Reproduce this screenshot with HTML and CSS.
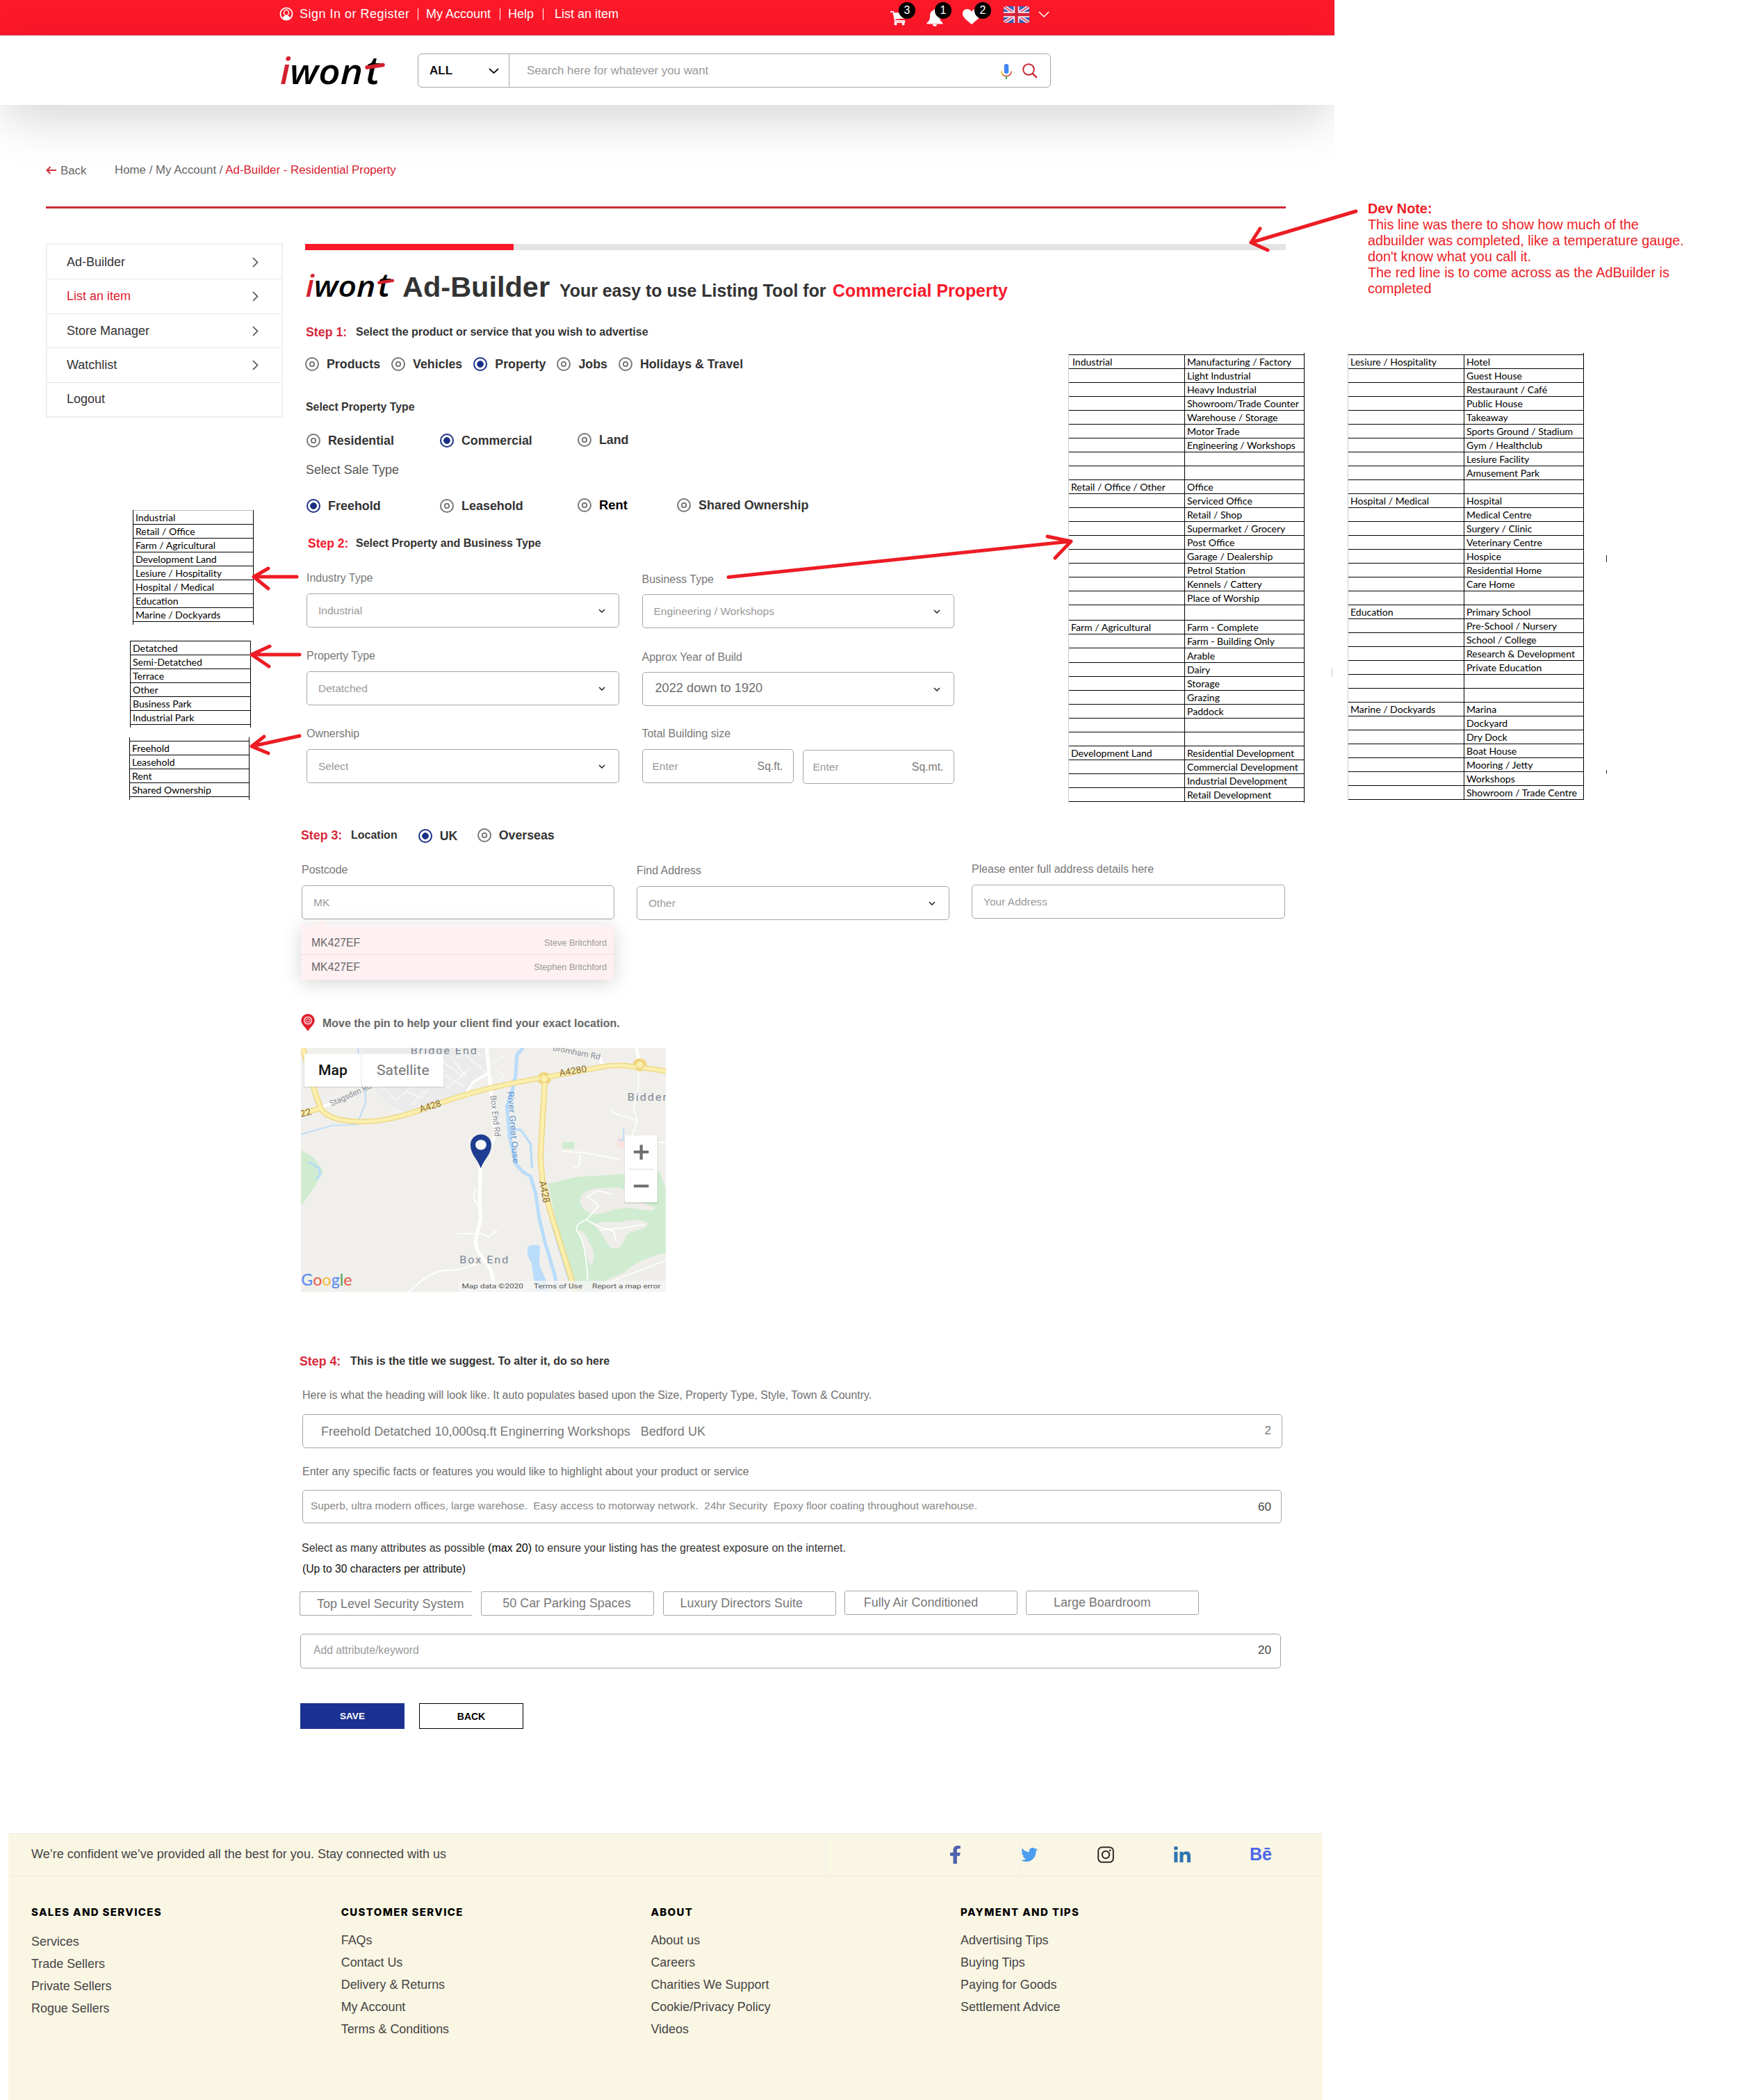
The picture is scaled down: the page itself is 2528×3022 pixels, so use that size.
FILE: index.html
```html
<!DOCTYPE html>
<html lang="en">
<head>
<meta charset="utf-8">
<title>iwont Ad-Builder - Commercial Property</title>
<link rel="stylesheet" href="styles.css">
</head>
<body>
<div class="board">
<div class="site">

  <div class="topbar">
    <nav class="topnav">
      <svg class="user" width="20" height="20" viewBox="0 0 20 20"><circle cx="10" cy="10" r="8.600" fill="none" stroke="#fff" stroke-width="1.800"/><ellipse cx="10" cy="8.200" rx="3.400" ry="4" fill="none" stroke="#fff" stroke-width="1.500"/><path d="M4.200 16c1-2.400 2.700-3.200 4.300-3.700h3c1.600.5 3.300 1.300 4.300 3.700a8.600 8.600 0 0 1-11.600 0z" fill="#fff"/></svg>
      <span class="n1">Sign In or Register</span><i class="sep"></i>
      <span class="n2">My Account</span><i class="sep"></i>
      <span class="n3">Help</span><i class="sep"></i>
      <span class="n4">List an item</span>
    </nav>
    <div class="tools">
      <span class="tool cart"><svg width="24" height="22" viewBox="0 0 24 22"><path d="M0 .9h4.200l2.600 12.900h13.400v2.300H5.600" fill="none" stroke="#fff" stroke-width="1.700"/><path d="M4.500 2.200H23l-2.300 8.300L6.300 11.800z" fill="#fff"/><circle cx="7.600" cy="18.400" r="2" fill="#fff"/><circle cx="18.600" cy="18.400" r="2" fill="#fff"/></svg><b class="badge">3</b></span>
      <span class="tool bell"><svg width="24" height="25" viewBox="0 0 24 25"><path d="M12 0c1.200 0 1.900.8 1.900 2 3.600 1 5 3.900 5 7.500 0 5.500 1.300 8 4.600 10.500v1.500H.5V20c3.300-2.500 4.600-5 4.600-10.500 0-3.600 1.400-6.500 5-7.500 0-1.200.7-2 1.900-2zM8.800 22h6.400c-.3 1.900-1.600 3-3.200 3s-2.900-1.100-3.200-3z" fill="#fff"/></svg><b class="badge">1</b></span>
      <span class="tool heart"><svg width="26" height="22" viewBox="0 0 26 22"><path d="M13 22C6 16 0 12 0 6.700 0 2.800 2.900 0 6.500 0 9.300 0 11.700 1.500 13 3.800 14.300 1.500 16.700 0 19.500 0 23.100 0 26 2.800 26 6.700 26 12 20 16 13 22z" fill="#fff"/></svg><b class="badge">2</b></span>
      <svg class="flag" width="37" height="24" viewBox="0 0 37 24"><rect width="37" height="24" fill="#3a5cb8"/><path d="M0 0l37 24M37 0L0 24" stroke="#efe3ee" stroke-width="5"/><path d="M0 0l37 24M37 0L0 24" stroke="#e0435c" stroke-width="1.600"/><path d="M18.500 0v24M0 12h37" stroke="#f6e6ea" stroke-width="8"/><path d="M18.500 0v24M0 12h37" stroke="#d5233c" stroke-width="4.600"/></svg>
      <svg class="down" width="16" height="9" viewBox="0 0 16 9"><path d="M.8 1l7.200 7 7.200-7" fill="none" stroke="#fff" stroke-width="1.500"/></svg>
    </div>
  </div>

  <header class="header">
    <svg class="logo" width="152" height="45" viewBox="0 0 152 45"><text x="0" y="45" font-size="52" fill="#d3202f">i</text><text x="14" y="45" font-size="50" textLength="105" lengthAdjust="spacingAndGlyphs">won</text><text x="123" y="45" font-size="56">t</text><path d="M125 21l23-3.500" stroke="#d3202f" stroke-width="5.500" stroke-linecap="round"/></svg>
    <div class="search">
      <div class="scope"><b>ALL</b><svg width="15" height="8" viewBox="0 0 15 8"><path d="M1 1l6.500 6L14 1" fill="none" stroke="#111" stroke-width="1.800"/></svg></div>
      <span class="ph">Search here for whatever you want</span>
      <svg class="mic" width="16" height="22" viewBox="0 0 16 22"><rect x="4.800" y="0" width="6.400" height="14" rx="3.200" fill="#4285f4"/><path d="M.9 10.500c0 2.300.7 3.900 2 5" fill="none" stroke="#fbbc05" stroke-width="1.800"/><path d="M2.900 15.500c2.800 2.800 7.400 2.800 10.200 0 1.300-1.100 2-2.700 2-5" fill="none" stroke="#d9604f" stroke-width="1.800"/><path d="M8 18v4" stroke="#34a853" stroke-width="2"/></svg>
      <svg class="glass" width="22" height="22" viewBox="0 0 22 22"><circle cx="9" cy="9" r="7.800" fill="none" stroke="#c8242f" stroke-width="1.900"/><path d="M14.800 14.800l6 6" stroke="#c8242f" stroke-width="2.400"/></svg>
    </div>
  </header>

  <div class="crumbs">
    <svg width="15" height="12" viewBox="0 0 15 12"><path d="M15 6H1.500M6.500 1L1.500 6l5 5" fill="none" stroke="#d3303c" stroke-width="2"/></svg>
    <span class="back">Back</span>
    <span class="trail">Home / My Account / <em>Ad-Builder - Residential Property</em></span>
  </div>

  <div class="main">
    <aside class="side">
      <a><span>Ad-Builder</span><svg width="9" height="15" viewBox="0 0 9 15"><path d="M1 1l6.500 6.500L1 14" fill="none" stroke="#444" stroke-width="1.500"/></svg></a>
      <a class="on"><span>List an item</span><svg width="9" height="15" viewBox="0 0 9 15"><path d="M1 1l6.500 6.500L1 14" fill="none" stroke="#444" stroke-width="1.500"/></svg></a>
      <a><span>Store Manager</span><svg width="9" height="15" viewBox="0 0 9 15"><path d="M1 1l6.500 6.500L1 14" fill="none" stroke="#444" stroke-width="1.500"/></svg></a>
      <a><span>Watchlist</span><svg width="9" height="15" viewBox="0 0 9 15"><path d="M1 1l6.500 6.500L1 14" fill="none" stroke="#444" stroke-width="1.500"/></svg></a>
      <a><span>Logout</span></a>
    </aside>

    <section class="content">
      <div class="progress"><i></i></div>
      <h1 class="title">
        <svg class="logo" width="130" height="38" viewBox="0 0 152 45"><text x="0" y="45" font-size="52" fill="#d3202f">i</text><text x="14" y="45" font-size="50" textLength="105" lengthAdjust="spacingAndGlyphs">won</text><text x="123" y="45" font-size="56">t</text><path d="M125 21l23-3.500" stroke="#d3202f" stroke-width="5.500" stroke-linecap="round"/></svg>
        <span class="big">Ad-Builder</span>
        <span class="sub">Your easy to use Listing Tool for</span>
        <span class="sub red">Commercial Property</span>
      </h1>

      <div class="step s1"><b>Step 1:</b><strong>Select the product or service that you wish to advertise</strong></div>
      <div class="radios r1">
        <label><i></i><span>Products</span></label>
        <label><i></i><span>Vehicles</span></label>
        <label><i class="on"></i><span>Property</span></label>
        <label><i></i><span>Jobs</span></label>
        <label><i></i><span>Holidays &amp; Travel</span></label>
      </div>
      <p class="subhead">Select Property Type</p>
      <div class="radios r2">
        <label><i></i><span>Residential</span></label>
        <label><i class="on"></i><span>Commercial</span></label>
        <label class="up"><i></i><span>Land</span></label>
      </div>
      <p class="subhead sale">Select Sale Type</p>
      <div class="radios r3">
        <label><i class="on"></i><span>Freehold</span></label>
        <label><i></i><span>Leasehold</span></label>
        <label class="up"><i></i><span class="rent">Rent</span></label>
        <label class="up"><i></i><span>Shared Ownership</span></label>
      </div>

      <div class="step s2"><b>Step 2:</b><strong>Select Property and Business Type</strong></div>
      <div class="fields two">
        <div class="field"><span class="lab">Industry Type</span><div class="box"><span>Industrial</span><svg class="chev" width="10" height="6" viewBox="0 0 10 6"><path d="M1 1l4 4 4-4" fill="none" stroke="#222" stroke-width="1.500"/></svg></div></div>
        <div class="field low"><span class="lab">Business Type</span><div class="box"><span>Engineering / Workshops</span><svg class="chev" width="10" height="6" viewBox="0 0 10 6"><path d="M1 1l4 4 4-4" fill="none" stroke="#222" stroke-width="1.500"/></svg></div></div>
        <div class="field"><span class="lab">Property Type</span><div class="box"><span>Detatched</span><svg class="chev" width="10" height="6" viewBox="0 0 10 6"><path d="M1 1l4 4 4-4" fill="none" stroke="#222" stroke-width="1.500"/></svg></div></div>
        <div class="field low"><span class="lab">Approx Year of Build</span><div class="box"><span class="year">2022 down to 1920</span><svg class="chev" width="10" height="6" viewBox="0 0 10 6"><path d="M1 1l4 4 4-4" fill="none" stroke="#222" stroke-width="1.500"/></svg></div></div>
        <div class="field"><span class="lab">Ownership</span><div class="box"><span>Select</span><svg class="chev" width="10" height="6" viewBox="0 0 10 6"><path d="M1 1l4 4 4-4" fill="none" stroke="#222" stroke-width="1.500"/></svg></div></div>
        <div class="field size"><span class="lab">Total Building size</span><div class="pair"><div class="box"><span>Enter</span><em>Sq.ft.</em></div><div class="box"><span>Enter</span><em>Sq.mt.</em></div></div></div>
      </div>

      <div class="step s3"><b>Step 3:</b><strong>Location</strong>
        <div class="radios r4"><label class="uk"><i class="on"></i><span>UK</span></label><label class="up"><i></i><span>Overseas</span></label></div>
      </div>
      <div class="fields three">
        <div class="field pc"><span class="lab">Postcode</span><div class="box"><span>MK</span></div>
          <div class="menu">
            <div><span>MK427EF</span><em>Steve Britchford</em></div>
            <div><span>MK427EF</span><em>Stephen Britchford</em></div>
          </div>
        </div>
        <div class="field fa"><span class="lab">Find Address</span><div class="box"><span>Other</span><svg class="chev" width="10" height="6" viewBox="0 0 10 6"><path d="M1 1l4 4 4-4" fill="none" stroke="#222" stroke-width="1.500"/></svg></div></div>
        <div class="field"><span class="lab">Please enter full address details here</span><div class="box"><span>Your Address</span></div></div>
      </div>

      <div class="pin"><svg width="20" height="25" viewBox="0 0 20 25"><path d="M10 0a9.700 9.700 0 0 1 9.700 9.700C19.700 15 13.500 19 10 25 6.500 19 .3 15 .3 9.700A9.700 9.700 0 0 1 10 0z" fill="#e01f2d"/><circle cx="10" cy="9.500" r="5.200" fill="none" stroke="#fff" stroke-width="1.300"/><circle cx="10" cy="9.500" r="2.500" fill="none" stroke="#fff" stroke-width="1"/></svg><b>Move the pin to help your client find your exact location.</b></div>

      <svg class="map" width="525" height="351" viewBox="35 54 1470 1052" preserveAspectRatio="none">
        <rect x="35" y="54" width="1470" height="1052" fill="#f0efeb"/>
        <path d="M270 54L640 54 790 54 790 160 700 240 500 320 440 335 380 290 330 230z" fill="#ebebeb"/>
        <g fill="none" stroke="#fafafa" stroke-width="4"><path d="M360 220l60 60 60-60M400 310l40 20M520 70l30 60 70 30M600 110l80 60 40-30M640 90l60 90M610 170l80 50M680 70l70 60 60 60M800 130l60-50M620 230l80-70M460 240l60 30 30-40M480 300l50-60M660 100l50-40 60 30M820 150l30 20-20 40"/></g>
        <path d="M35 495l50 30 40 60-30 60-60 90z" fill="#d0ecd0"/>
        <path d="M65 545l40 25 8 30-15 20" fill="none" stroke="#b9dcfb" stroke-width="9"/>
        <path d="M1030 640l120-30 330-20 25 70v280c-60 10-140 40-200 120l-50 46h-120l-60-240z" fill="#d0ecd0"/>
        <path d="M1165 690c30-40 90-30 150-35 30 10 60 60 145 85 10 30-60 5-110 5-60 0-90 30-140 25-40-10-60-50-45-80zM1210 815c60-20 80 0 130-15 50-10 90 0 95 15-20 30-70 20-90 50-10 30-20 55-50 55-30-5-40-75-85-105zM1150 840c30 0 40 40 60 80 10 30 5 60-5 70-20-10-20-90-55-150zM1505 955l-110 40-130 60 -20 51h260z" fill="#eeede9"/>
        <rect x="1088" y="460" width="48" height="29" fill="#d0ecd0"/>
        <path d="M1310 440h80v45h-80z" fill="#fbe1e0"/>
        <g fill="none" stroke="#fff" stroke-width="5"><path d="M1280 315c20 40 80 30 105 55M1090 500l80 5 150 30M1160 510l-3 50-25 15M1370 430l20-60-15 -60 20-90v-70M1470 461h35M1185 795l50-60-45-40 40-25 60 15M1185 795c-50 20-45 45-30 60 20 40 30 90 35 200M1185 795l50 30 60 20 10 40M1240 840l100 -10 80 -15M1505 970l-240 100M740 660c-20 40 0 60 10 80M665 855h100l25 15 35-30"/></g>
        <g fill="none" stroke="#b9dcfb"><path d="M265 54l5 60 25 80v100l-35 90-100 5-125 38" stroke-width="5"/><path d="M930 54l-25 30-5 90-15 70-20 60 10 130 25 120 30 35 30 20 20 70 15 110 25 110 30 107 25 100" stroke-width="14"/><path d="M880 405l40 2 40 60 6 105" stroke-width="9"/><path d="M1030 760l40 150 50 170" stroke-width="4"/><path d="M1335 400v50l-20 5" stroke-width="5"/></g>
        <path d="M950 910c15-8 40-8 48 0l-3 80 25 60 15 56h-55l-15-120-18-40z" fill="#b9dcfb"/>
        <g fill="none" stroke="#fff"><path d="M783 54l15 166 20 210-60 140-4 150 5 70-15 70c-12 40 0 70 20 95 30 40 45 60 50 151" stroke-width="14"/><path d="M700 250l30-50 65-40" stroke-width="11"/><path d="M1385 54l15 60M1240 95l6 30M115 310l60-25" stroke-width="12"/><path d="M745 985c-90 40-110 20-160 35-50 20-80 50-115 86" stroke-width="6"/></g>
        <g fill="none" stroke="#efd57f" stroke-width="23"><path d="M42 54l55 210 18 50c20 40 80 55 150 58 120 5 240-45 330-80 130-50 270-85 420-110l225-45c50-12 100-12 265 18M35 338l80-24M1018 185l-18 340 8 100 30 130 105 360"/></g>
        <circle cx="1015" cy="186" r="28" fill="#efd57f"/><circle cx="1400" cy="127" r="28" fill="#efd57f"/>
        <g fill="none" stroke="#fbefaf" stroke-width="15"><path d="M42 54l55 210 18 50c20 40 80 55 150 58 120 5 240-45 330-80 130-50 270-85 420-110l225-45c50-12 100-12 265 18M35 338l80-24M1018 185l-18 340 8 100 30 130 105 360"/></g>
        <circle cx="1015" cy="186" r="16" fill="#fbefaf" stroke="#efd57f" stroke-width="5"/><circle cx="1400" cy="127" r="16" fill="#fbefaf" stroke="#efd57f" stroke-width="5"/>
        <g class="road">
          <text x="517" y="332" textLength="90" lengthAdjust="spacingAndGlyphs" transform="rotate(-18 517 332)">A428</text>
          <text x="1078" y="176" textLength="112" lengthAdjust="spacingAndGlyphs" transform="rotate(-10 1078 176)">A4280</text>
          <text x="995" y="630" textLength="95" lengthAdjust="spacingAndGlyphs" transform="rotate(80 995 630)">A428</text>
          <text x="36" y="353" transform="rotate(-16 36 353)">22</text>
        </g>
        <g class="street">
          <text x="158" y="306" textLength="182" lengthAdjust="spacingAndGlyphs" transform="rotate(-26 158 306)">Stagsden Rd</text>
          <text x="1048" y="64" textLength="195" lengthAdjust="spacingAndGlyphs" transform="rotate(12 1048 64)">Bromham Rd</text>
          <text x="797" y="260" textLength="178" lengthAdjust="spacingAndGlyphs" transform="rotate(84 797 260)">Box End Rd</text>
          <text class="river" x="868" y="242" textLength="312" lengthAdjust="spacingAndGlyphs" transform="rotate(86 868 242)">River Great Ouse</text>
        </g>
        <g class="town">
          <text x="477" y="80" textLength="266" lengthAdjust="spacing">Bridge End</text>
          <text x="1350" y="282" textLength="158" lengthAdjust="spacing">Bidder</text>
          <text x="674" y="984" textLength="196" lengthAdjust="spacing">Box End</text>
        </g>
        <path d="M760 574c-12-40-42-60-42-103a42 44 0 0 1 84 0c0 43-30 63-42 103z" fill="#1f3d90"/><circle cx="760" cy="472" r="22" fill="#fafafa"/>
        <rect x="46" y="82" width="564" height="144" fill="#000" opacity=".1"/><rect x="48" y="80" width="561" height="141" fill="#fff"/><path d="M278 80v141" stroke="#e8e8e8" stroke-width="3"/>
        <text class="ctl dark" x="105" y="171" textLength="117" lengthAdjust="spacingAndGlyphs">Map</text>
        <text class="ctl" x="340" y="171" textLength="212" lengthAdjust="spacingAndGlyphs">Satellite</text>
        <rect x="1337" y="434" width="137" height="292" fill="#000" opacity=".1"/><rect x="1339" y="432" width="132" height="288" fill="#fff"/>
        <path d="M1355 577h102" stroke="#ddd" stroke-width="3"/><path d="M1376 503h60M1406 472v64M1376 650h60" stroke="#6e6e6e" stroke-width="12"/>
        <rect x="668" y="1058" width="837" height="48" fill="#f5f5f5" opacity=".8"/>
        <g class="legal">
          <text x="683" y="1090" textLength="248" lengthAdjust="spacingAndGlyphs">Map data ©2020</text>
          <text x="973" y="1090" textLength="196" lengthAdjust="spacingAndGlyphs">Terms of Use</text>
          <text x="1208" y="1090" textLength="276" lengthAdjust="spacingAndGlyphs">Report a map error</text>
        </g>
        <text class="google" x="36" y="1078" textLength="205" lengthAdjust="spacingAndGlyphs"><tspan fill="#5b8def">G</tspan><tspan fill="#e8604f">o</tspan><tspan fill="#f2bd42">o</tspan><tspan fill="#5b8def">g</tspan><tspan fill="#58a55c">l</tspan><tspan fill="#e8604f">e</tspan></text>
      </svg>

      <div class="step s4"><b>Step 4:</b><strong>This is the title we suggest. To alter it, do so here</strong></div>
      <p class="note here">Here is what the heading will look like. It auto populates based upon the Size, Property Type, Style, Town &amp; Country.</p>
      <div class="wide w1"><span class="head">Freehold Detatched 10,000sq.ft Enginerring Workshops&nbsp;&nbsp; Bedford UK</span><em>2</em></div>
      <p class="note facts">Enter any specific facts or features you would like to highlight about your product or service</p>
      <div class="wide w2"><span class="superb">Superb, ultra modern offices, large warehose.&nbsp; Easy access to motorway network.&nbsp; 24hr Security&nbsp; Epoxy floor coating throughout warehouse.</span><em>60</em></div>
      <p class="attr">Select as many attributes as possible <span>(max 20)</span> to ensure your listing has the greatest exposure on the internet.</p>
      <p class="attr upto">(Up to 30 characters per attribute)</p>
      <div class="chips">
        <div class="open"><span>Top Level Security System</span></div>
        <div><span>50 Car Parking Spaces</span></div>
        <div><span>Luxury Directors Suite</span></div>
        <div class="up"><span>Fully Air Conditioned</span></div>
        <div class="up"><span>Large Boardroom</span></div>
      </div>
      <div class="wide w3"><span class="add">Add attribute/keyword</span><em>20</em></div>
      <div class="buttons"><button class="save">SAVE</button><button>BACK</button></div>
    </section>
  </div>

  <footer class="footer">
    <div class="social">
      <p>We’re confident we’ve provided all the best for you. Stay connected with us</p>
      <div class="icons">
        <svg width="15" height="26" viewBox="22 0 276 512" preserveAspectRatio="none"><path fill="#4f62ae" d="M279.140 288l14.220-92.660h-88.910v-60.130c0-25.350 12.420-50.060 52.240-50.060h40.420V6.260S260.430 0 225.360 0c-73.220 0-121.080 44.380-121.080 124.720v70.620H22.890V288h81.390v224h100.170V288z"/></svg>
        <svg class="tw" width="24" height="20" viewBox="0 48 512 416" preserveAspectRatio="none"><path fill="#4a9df0" d="M459.370 151.716c.325 4.548.325 9.097.325 13.645 0 138.720-105.583 298.558-298.558 298.558-59.452 0-114.680-17.219-161.137-47.106 8.447.974 16.568 1.299 25.340 1.299 49.055 0 94.213-16.568 130.274-44.832-46.132-.975-84.792-31.188-98.112-72.772 6.498.974 12.995 1.624 19.818 1.624 9.421 0 18.843-1.300 27.614-3.573-48.081-9.747-84.143-51.980-84.143-102.985v-1.299c13.969 7.797 30.214 12.670 47.431 13.319-28.264-18.843-46.781-51.005-46.781-87.391 0-19.492 5.197-37.360 14.294-52.954 51.655 63.675 129.300 105.258 216.365 109.807-1.624-7.797-2.599-15.918-2.599-24.040 0-57.828 46.782-104.934 104.934-104.934 30.213 0 57.502 12.670 76.670 33.137 23.715-4.548 46.456-13.320 66.599-25.340-7.798 24.366-24.366 44.833-46.132 57.827 21.117-2.273 41.584-8.122 60.426-16.243-14.292 20.791-32.161 39.308-52.628 54.253z"/></svg>
        <svg class="ig" width="24" height="24" viewBox="0 0 24 24"><rect x="1.200" y="1.200" width="21.600" height="21.600" rx="5.500" fill="none" stroke="#2f2a25" stroke-width="2"/><circle cx="12" cy="12" r="5.200" fill="none" stroke="#2f2a25" stroke-width="2"/><circle cx="18.200" cy="5.800" r="1.400" fill="#2f2a25"/></svg>
        <svg class="li" width="24" height="23" viewBox="0 0 448 448" preserveAspectRatio="none"><path fill="#2f73b0" d="M100.280 448H7.400V148.900h92.880zM53.790 108.100C24.090 108.100 0 83.500 0 53.800a53.790 53.790 0 0 1 107.580 0c0 29.700-24.100 54.300-53.790 54.300zM447.900 448h-92.680V302.400c0-34.700-.7-79.200-48.290-79.200-48.290 0-55.690 37.700-55.690 76.700V448h-92.780V148.900h89.080v40.800h1.300c12.400-23.500 42.690-48.300 87.880-48.300 94 0 111.280 61.900 111.280 142.300V448z"/></svg>
        <b class="be">Bē</b>
      </div>
    </div>
    <div class="cols">
      <div class="col c1"><h4>SALES AND SERVICES</h4><a>Services</a><a>Trade Sellers</a><a>Private Sellers</a><a>Rogue Sellers</a></div>
      <div class="col"><h4>CUSTOMER SERVICE</h4><a>FAQs</a><a>Contact Us</a><a>Delivery &amp; Returns</a><a>My Account</a><a>Terms &amp; Conditions</a></div>
      <div class="col"><h4>ABOUT</h4><a>About us</a><a>Careers</a><a>Charities We Support</a><a>Cookie/Privacy Policy</a><a>Videos</a></div>
      <div class="col"><h4>PAYMENT AND TIPS</h4><a>Advertising Tips</a><a>Buying Tips</a><a>Paying for Goods</a><a>Settlement Advice</a></div>
    </div>
  </footer>
</div>

<!-- review notes pinned over the page -->
<table class="sheet l1"><tr><td>Industrial</td></tr><tr><td>Retail / Office</td></tr><tr><td>Farm / Agricultural</td></tr><tr><td>Development Land</td></tr><tr><td>Lesiure / Hospitality</td></tr><tr><td>Hospital / Medical</td></tr><tr><td>Education</td></tr><tr><td>Marine / Dockyards</td></tr></table>
<table class="sheet l2"><tr><td>Detatched</td></tr><tr><td>Semi-Detatched</td></tr><tr><td>Terrace</td></tr><tr><td>Other</td></tr><tr><td>Business Park</td></tr><tr><td>Industrial Park</td></tr></table>
<table class="sheet l3"><tr><td>Freehold</td></tr><tr><td>Leasehold</td></tr><tr><td>Rent</td></tr><tr><td>Shared Ownership</td></tr></table>

<table class="sheet big1">
<tr><td class="ind">Industrial</td><td>Manufacturing / Factory</td></tr>
<tr><td></td><td>Light Industrial</td></tr>
<tr><td></td><td>Heavy Industrial</td></tr>
<tr><td></td><td>Showroom/Trade Counter</td></tr>
<tr><td></td><td>Warehouse / Storage</td></tr>
<tr><td></td><td>Motor Trade</td></tr>
<tr><td></td><td>Engineering / Workshops</td></tr>
<tr><td></td><td></td></tr>
<tr><td></td><td></td></tr>
<tr><td>Retail / Office / Other</td><td>Office</td></tr>
<tr><td></td><td>Serviced Office</td></tr>
<tr><td></td><td>Retail / Shop</td></tr>
<tr><td></td><td>Supermarket / Grocery</td></tr>
<tr><td></td><td>Post Office</td></tr>
<tr><td></td><td>Garage / Dealership</td></tr>
<tr><td></td><td>Petrol Station</td></tr>
<tr><td></td><td>Kennels / Cattery</td></tr>
<tr><td></td><td>Place of Worship</td></tr>
<tr class="h22"><td></td><td></td></tr>
<tr><td>Farm / Agricultural</td><td>Farm - Complete</td></tr>
<tr><td></td><td>Farm - Building Only</td></tr>
<tr class="h21"><td></td><td>Arable</td></tr>
<tr><td></td><td>Dairy</td></tr>
<tr><td></td><td>Storage</td></tr>
<tr><td></td><td>Grazing</td></tr>
<tr><td></td><td>Paddock</td></tr>
<tr><td></td><td></td></tr>
<tr><td></td><td></td></tr>
<tr><td>Development Land</td><td>Residential Development</td></tr>
<tr><td></td><td>Commercial Development</td></tr>
<tr><td></td><td>Industrial Development</td></tr>
<tr><td></td><td>Retail Development</td></tr>
</table>
<table class="sheet big2">
<tr><td>Lesiure / Hospitality</td><td>Hotel</td></tr>
<tr><td></td><td>Guest House</td></tr>
<tr><td></td><td>Restauraunt / Café</td></tr>
<tr><td></td><td>Public House</td></tr>
<tr><td></td><td>Takeaway</td></tr>
<tr><td></td><td>Sports Ground / Stadium</td></tr>
<tr><td></td><td>Gym / Healthclub</td></tr>
<tr><td></td><td>Lesiure Facility</td></tr>
<tr><td></td><td>Amusement Park</td></tr>
<tr><td></td><td></td></tr>
<tr><td>Hospital / Medical</td><td>Hospital</td></tr>
<tr><td></td><td>Medical Centre</td></tr>
<tr><td></td><td>Surgery / Clinic</td></tr>
<tr><td></td><td>Veterinary Centre</td></tr>
<tr><td></td><td>Hospice</td></tr>
<tr><td></td><td>Residential Home</td></tr>
<tr><td></td><td>Care Home</td></tr>
<tr><td></td><td></td></tr>
<tr><td>Education</td><td>Primary School</td></tr>
<tr><td></td><td>Pre-School / Nursery</td></tr>
<tr><td></td><td>School / College</td></tr>
<tr><td></td><td>Research &amp; Development</td></tr>
<tr><td></td><td>Private Education</td></tr>
<tr><td></td><td></td></tr>
<tr><td></td><td></td></tr>
<tr><td>Marine / Dockyards</td><td>Marina</td></tr>
<tr><td></td><td>Dockyard</td></tr>
<tr><td></td><td>Dry Dock</td></tr>
<tr><td></td><td>Boat House</td></tr>
<tr><td></td><td>Mooring / Jetty</td></tr>
<tr><td></td><td>Workshops</td></tr>
<tr><td></td><td>Showroom / Trade Centre</td></tr>
</table>

<div class="devnote"><b>Dev Note:</b><br>This line was there to show how much of the<br>adbuilder was completed, like a temperature gauge.<br>don't know what you call it.<br>The red line is to come across as the AdBuilder is<br>completed</div>

<svg class="arrows" width="2528" height="1200" viewBox="0 0 2528 1200">
  <g fill="none" stroke="#ed1c24" stroke-width="5" stroke-linecap="round" stroke-linejoin="round">
    <path d="M1951 304L1800 349M1813 329l-13 20 24 11"/>
    <path d="M427 830h-62M386 818l-21 12 21 17"/>
    <path d="M431 942h-69M388 930l-26 12 25 17"/>
    <path d="M431 1059l-69 15M380 1060l-18 14 24 10"/>
    <path d="M1048 830.500L1541 779M1507 772l34 7-23 24"/>
  </g>
  <path d="M2311.500 799v10M2311.500 1108v5" stroke="#222"/><path d="M1916.500 961v13" stroke="#ccc"/>
</svg>
</div>
</body>
</html>
```
FILE: styles.css
```css
* { box-sizing: border-box; }
body { margin: 0; background: #fff; font-family: "Liberation Sans", Arial, sans-serif; color: #333; }
h1, h4, p { margin: 0; }
em, i { font-style: normal; }
svg { display: block; flex: none; }
.board { position: relative; width: 2528px; height: 3022px; overflow: hidden; }
.site { width: 1920px; height: 3022px; overflow: hidden; background: #fff; }

/* top bar */
.topbar { display: flex; height: 51px; background: #fb1829; border-bottom: 1px solid #d3283a; color: #fff; }
.topnav { display: flex; align-items: flex-start; width: 1281px; padding: 8px 0 0 402px; font-size: 18px; line-height: 24px; white-space: nowrap; }
.topnav .user { margin: 2px 9px 0 0; }
.n1 { width: 170px; letter-spacing: .5px; }
.n2 { width: 106px; }
.n3 { width: 50px; }
.sep { width: 1px; height: 17px; margin: 4px 11px 0 0; background: #fff; }
.n3 + .sep { margin-right: 16px; }
.tools { display: flex; align-items: flex-start; }
.tool { position: relative; }
.cart { width: 52px; padding-top: 16px; }
.bell { width: 52px; padding-top: 13px; }
.heart { width: 59px; padding-top: 13px; }
.badge { position: absolute; left: 12px; top: 3px; width: 24px; height: 24px; border-radius: 50%; background: #000; color: #fff; font-weight: 400; font-size: 16px; line-height: 24px; text-align: center; }
.heart .badge { left: 17px; }
.flag { margin-top: 9px; }
.down { margin: 16px 0 0 13px; }

/* header */
.header { display: flex; height: 100px; padding-left: 403px; background: #fff; box-shadow: 0 26px 68px -6px rgba(0,0,0,.17); }
.logo { font-family: "Open Sans", sans-serif; font-style: italic; font-weight: 600; fill: #000; overflow: visible; }
.header .logo { margin-top: 25px; }
.search { display: flex; align-items: center; width: 911px; height: 49px; margin: 26px 0 0 46px; border: 1px solid #a5a5a5; border-radius: 6px; }
.scope { display: flex; align-items: center; justify-content: space-between; width: 131px; height: 47px; padding: 0 14px 0 16px; border-right: 1px solid #a5a5a5; font-size: 17px; color: #111; }
.ph { flex: 1; padding-left: 25px; font-size: 16.850px; color: #999; }
.mic { margin: 3px 15px 0 0; }
.glass { margin-right: 18px; }

/* breadcrumb */
.crumbs { display: flex; align-items: center; height: 149px; margin: 0 70px 0 66px; padding-top: 42px; border-bottom: 3px solid #cb2a3a; font-size: 16.870px; color: #666; }
.crumbs .back { width: 84px; padding: 2px 0 0 6px; }
.crumbs em { color: #d6202f; }

/* main */
.main { display: flex; height: 2338px; padding-left: 66px; }
.side { width: 341px; height: 251px; margin: 50px 25px 0 0; border: 2px solid #f0f0f0; }
.side a { display: flex; justify-content: space-between; align-items: center; height: 50px; padding: 0 33px 0 28px; border-bottom: 1px solid #e6e6e6; font-size: 18px; color: #333; }
.side a:first-child { height: 50px; padding-top: 1px; }
.side a:nth-child(3) { height: 49px; }
.side a:last-child { height: 48px; border: 0; padding-bottom: 1px; }
.side .on { color: #e0202f; }
.content { width: 1418px; padding-top: 51px; }
.progress { width: 1411px; height: 9px; margin-left: 7px; background: #e4e4e4; }
.progress i { display: block; width: 300px; height: 9px; background: #f71a2b; }
.title { display: flex; align-items: baseline; height: 60px; margin: 23px 0 0 7px; font-weight: 700; white-space: nowrap; color: #333; }
.title .big { width: 226px; margin-left: 10px; font-size: 41.500px; line-height: 60px; }
.title .sub { width: 393px; font-size: 24.900px; }
.title .red { color: #f71a2b; }

.step { display: flex; height: 24px; line-height: 24px; font-size: 16px; white-space: nowrap; color: #333; }
.step b { width: 72px; font-size: 17.800px; color: #d6283a; }
.s1 { margin: 23px 0 0 8px; }
.s2 { margin: 30px 0 0 11px; }
.s2 b { width: 69px; font-size: 17.500px; color: #f71a2b; }
.s3 { margin: 62px 0 0 1px; }
.s4 { margin: 88px 0 0 -1px; }
.s4 b { width: 73px; }

.radios { display: flex; height: 24px; line-height: 24px; font-weight: 700; font-size: 17.800px; color: #333; white-space: nowrap; }
.radios label { display: flex; align-items: center; }
.radios i { flex: none; width: 20px; height: 20px; margin-right: 11px; border: 2px solid #777; border-radius: 50%; background: radial-gradient(circle, #fff 0 2px, #777 2.500px 4px, #fff 4.500px); }
.radios i.on { border-color: #1b3087; background: radial-gradient(circle, #1b3087 0 4.500px, #fff 5px); }
.radios .up { position: relative; top: -1px; }
.r1 { margin: 22px 0 0 7px; gap: 16px; }
.subhead { height: 24px; margin: 37px 0 0 8px; line-height: 25px; font-size: 15.850px; font-weight: 700; }
.r2 { margin: 25px 0 0 9px; }
.sale { margin-top: 18px; font-size: 17.900px; line-height: 24px; font-weight: 400; color: #555; }
.r3 { margin: 28px 0 0 9px; font-size: 17.950px; }
.r2 label, .r3 label { width: 192px; }
.r2 label + label, .r3 label + label { width: 198px; }
.r3 label + label + label { width: 143px; }
.rent { color: #000; font-size: 18.400px; }
.r4 { margin-top: 1px; }
.s3 .r4 { margin-left: 30px; }
.uk { width: 85px; }

.fields { display: grid; }
.two { grid-template-columns: 449.500px 449px; column-gap: 33px; row-gap: 28px; margin: 26px 0 0 9px; }
.field { position: relative; height: 84px; }
.lab { display: block; height: 24px; margin-bottom: 10px; line-height: 24px; font-size: 15.950px; color: #777; white-space: nowrap; }
.low .lab { padding-top: 2px; margin-bottom: 11px; }
.box { display: flex; align-items: center; justify-content: space-between; height: 49px; padding: 0 19px 0 16px; border: 1px solid #a5a5a5; border-radius: 5px; font-size: 15.550px; color: #999; background: #fff; }
.box em { font-size: 15.800px; color: #777; }
.box .year { padding: 0 0 2px 2px; font-size: 18.200px; color: #6e6e6e; }
.pair { display: flex; gap: 13px; }
.pair .box { width: 218px; padding: 0 14px; }
.pair .box + .box { margin-top: 1px; }
.three { grid-template-columns: 450px 450px 451px; column-gap: 32px; height: 86px; margin: 24px 0 0 2px; }
.three .lab { margin-bottom: 10px; padding-top: 1px; height: 25px; }
.pc { margin-top: 1px; }
.fa { margin-top: 2px; }
.menu { position: absolute; left: -1px; top: 92px; width: 450px; height: 79px; padding-top: 8px; background: #fff1f2; box-shadow: 0 4px 28px rgba(0,0,0,.17); }
.menu::before { content: ""; position: absolute; left: 22px; top: -7px; border: 8px solid transparent; border-top: 0; border-bottom: 7px solid #fff1f2; }
.menu div { display: flex; justify-content: space-between; align-items: center; height: 34px; padding: 2px 10px 0 15px; font-size: 15.750px; color: #666; }
.menu div + div { border-top: 1px solid #f0dadd; }
.menu em { font-size: 12.650px; color: #999; }

.pin { display: flex; align-items: flex-start; height: 25px; margin: 135px 0 0 1px; line-height: 27px; font-size: 15.980px; color: #666; }
.pin b { margin-left: 11px; }
.map { margin: 24px 0 0 .5px; }
.map text { font-family: Roboto, sans-serif; }
.road text { font-size: 40px; fill: #8a6d3b; }
.street text { font-size: 34px; fill: #8a9099; }
.street .river { fill: #5f97d3; }
.town text { font-size: 45px; fill: #7c8694; }
.ctl { font-size: 60px; fill: #777; }
.map .dark { fill: #111; font-weight: 500; }
.legal text { font-size: 29px; fill: #555; }
.map .google { font-size: 70px; font-weight: 500; font-family: Lato, sans-serif; }

.note { height: 24px; line-height: 24px; font-size: 15.970px; color: #707070; white-space: nowrap; }
.here { margin: 25px 0 0 3px; }
.facts { margin: 22px 0 0 3px; }
.wide { display: flex; align-items: center; justify-content: space-between; height: 49px; border: 1px solid #a5a5a5; border-radius: 5px; white-space: nowrap; }
.wide em { font-size: 17px; color: #444; }
.w1 { width: 1410px; margin: 15px 0 0 3px; padding: 1px 15px 0 26px; }
.w1 em { color: #777; padding-bottom: 2px; }
.head { font-size: 18.050px; color: #777; }
.w2 { width: 1409px; height: 48px; margin: 14px 0 0 3px; padding: 1px 14px 0 11px; }
.superb { padding-bottom: 3px; font-size: 15.430px; color: #888; }
.attr { height: 24px; margin: 24px 0 0 2px; line-height: 24px; font-size: 15.970px; color: #333; white-space: nowrap; }
.attr span { color: #000; }
.attr.upto { margin: 6px 0 0 3px; font-size: 15.670px; color: #111; }
.chips { display: flex; gap: 12.250px; height: 36px; margin: 19px 0 0 -1px; }
.chips div { width: 249px; height: 35px; margin-top: 1px; padding-left: 30px; border: 1px solid #a5a5a5; border-radius: 3px; line-height: 32px; font-size: 17.950px; color: #777; white-space: nowrap; }
.chips .up { margin-top: 0; }
.chips .open { padding: 1px 0 0 24px; border-right-color: transparent; }
.chips div:nth-child(3) { padding-left: 24px; }
.chips div:nth-child(4) { padding-left: 27px; }
.chips div:nth-child(5) { padding-left: 39px; }
.w3 { width: 1411px; height: 50px; margin: 26px 0 0 0; padding: 0 13px 2px 18px; }
.add { font-size: 15.700px; color: #999; }
.buttons { display: flex; gap: 21px; margin: 50px 0 0 0; }
.buttons button { width: 150px; height: 37px; padding: 0; border: 1px solid #000; background: #fff; color: #000; font: 700 14px "Liberation Sans", Arial, sans-serif; }
.buttons .save { border: 0; background: #1b3090; color: #fff; font-size: 13.600px; }

/* footer */
.footer { width: 1891px; height: 384px; margin-left: 12px; background: #faf6e4; border-top: 1px solid #ececec; }
.social { display: flex; height: 61px; border-bottom: 1px solid #ececec; }
.social p { width: 1175px; padding-left: 33px; line-height: 59px; font-size: 18px; color: #444; }
.icons { display: flex; align-items: center; flex: 1; padding: 0 0 1px 179px; border-left: 1px solid #efefef; background: linear-gradient(#efefef, #efefef) 278px 0 / 1px 100% no-repeat; }
.tw { margin-left: 87px; }
.ig { margin-left: 86px; }
.li { margin-left: 86px; }
.be { margin-left: 85px; font-size: 25px; color: #4a67e8; }
.cols { display: flex; padding: 40px 0 0 33px; }
.col { width: 445.700px; }
.col h4 { height: 24px; margin-bottom: 12px; line-height: 24px; font-family: Inter, sans-serif; font-weight: 800; font-size: 15px; letter-spacing: 1.350px; color: #000; white-space: nowrap; }
.col a { display: block; height: 32px; line-height: 32px; font-size: 17.930px; color: #444; }
.c1 h4 { margin-bottom: 14px; }

/* pinned notes */
.sheet { position: absolute; border-spacing: 0; table-layout: fixed; padding: 0 0 4px; border-left: 1px solid #000; border-right: 1px solid #000; font-family: Lato, "Liberation Sans", sans-serif; font-size: 14.050px; color: #000; }
.sheet td { height: 20px; padding: 0 0 0 3px; border-bottom: 1px solid #000; line-height: 19px; white-space: nowrap; }
.sheet tr:first-child td { height: 21px; border-top: 1px solid #000; }
.sheet td + td { border-left: 1px solid #000; }
.l1 { left: 191px; top: 734px; width: 174px; }
.l1 tr:first-child td { border-top-color: #bbb; }
.l2 { left: 187px; top: 922px; width: 174px; }
.l3 { left: 186px; top: 1061px; width: 173px; padding-top: 5px; }
.big1, .big2 { top: 508px; width: 340px; padding: 2px 0 1px; border-left-color: #ccc; }
.big1 { left: 1537px; }
.big2 { left: 1939px; padding-bottom: 0; }
.big1 td:first-child, .big2 td:first-child { width: 166px; }
.big1 .ind { padding-left: 5px; }
.big1 .h22 td { height: 22px; }
.big1 .h21 td { height: 21px; padding-top: 1px; }
.devnote { position: absolute; left: 1968px; top: 289px; font-size: 19.820px; line-height: 23px; color: #ed1c24; white-space: nowrap; }
.arrows { position: absolute; left: 0; top: 0; pointer-events: none; }
```
